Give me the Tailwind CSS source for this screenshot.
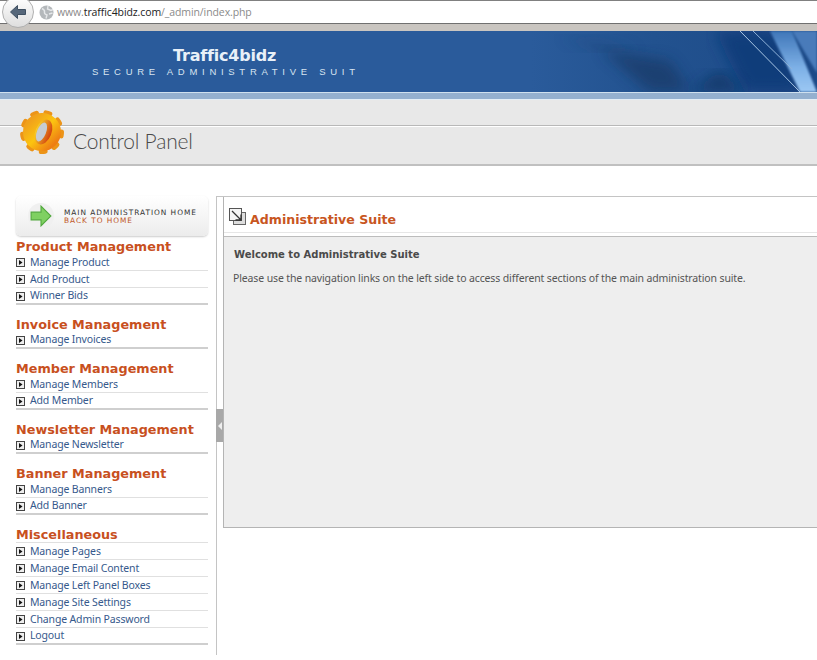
<!DOCTYPE html>
<html lang="en">
<head>
<meta charset="UTF-8">
<title>Traffic4bidz - Control Panel</title>
<script src="https://cdn.jsdelivr.net/npm/@tailwindcss/browser@4"></script>
</head>
<body class="bg-white w-[817px] h-[660px] overflow-hidden font-['Noto_Sans',sans-serif]">

<!-- browser chrome -->
<div class="relative h-[31px] bg-[#c9c5c0]">
  <div class="h-[24px] bg-white border-t border-b border-t-[#808080] border-b-[#707070] flex items-center pl-[39px]">
    <svg width="15" height="15" viewBox="0 0 15 15" class="shrink-0">
      <circle cx="7.5" cy="7.5" r="7" fill="#b4b8bb"/>
      <path d="M3 3.5 Q6 5 5.5 7 T8 10 L7 13.5 M9 1 L8.5 4 L12 5.5 L14 4.5 M10 9 L13.5 8" fill="none" stroke="#e6e8ea" stroke-width="1.4"/>
    </svg>
    <span class="ml-[3px] text-[10.5px] tracking-[-0.1px] leading-none text-[#8a8a8a] font-['Open_Sans',sans-serif]">www.<span class="text-[#222]">traffic4bidz.com</span>/_admin/index.php</span>
  </div>
  <div class="absolute left-[2px] top-[-4px] w-[32px] h-[32px] rounded-full bg-gradient-to-b from-white to-[#dedede] border border-[#b0b0b0] flex items-center justify-center">
    <svg width="18" height="16" viewBox="0 0 18 16"><path d="M8.5 1.5 L1.5 8 L8.5 14.5 V10.5 H16.5 V5.5 H8.5 Z" fill="#56677a" stroke="#3f5062" stroke-width="1"/></svg>
  </div>
</div>

<!-- banner -->
<div class="relative h-[61px] overflow-hidden bg-[linear-gradient(90deg,#2a5b9b_0%,#2a5b9b_65%,#22528f_80%,#1d4a88_100%)] flex flex-col items-start">
  <svg class="absolute inset-0" width="817" height="61" viewBox="0 0 817 61">
    <defs>
      <linearGradient id="streak" x1="0" y1="0" x2="0" y2="1"><stop offset="0" stop-color="#3f76b8"/><stop offset=".6" stop-color="#7db0e6"/><stop offset="1" stop-color="#9cc8f4"/></linearGradient>
      <filter id="soft"><feGaussianBlur stdDeviation="7"/></filter>
      <filter id="soft2"><feGaussianBlur stdDeviation="1.2"/></filter>
    </defs>
    <path d="M600 18 L670 30 L690 61 L650 61 Z" fill="#14305a" opacity=".55" filter="url(#soft)"/>
    <path d="M560 5 L640 20 L600 20 Z" fill="#1b3f70" opacity=".5" filter="url(#soft)"/>
    <path d="M715 0 L775 0 L805 61 L745 61 Z" fill="#113a78" opacity=".85" filter="url(#soft)"/>
    <path d="M690 61 L745 61 L720 40 Z" fill="#10305f" opacity=".7" filter="url(#soft)"/>
    <path d="M770 0 L792 0 L817 61 L800 61 Z" fill="url(#streak)" filter="url(#soft2)"/>
    <path d="M792 0 L817 0 L817 42 Z" fill="#5b90d0" opacity=".7" filter="url(#soft2)"/>
    <path d="M740 0 L800 61" stroke="#a8c6e4" stroke-width="1" fill="none"/>
    <path d="M753 0 L792 38" stroke="#8fb2d8" stroke-width="1" fill="none"/>
  </svg>
  <div class="relative ml-[173px] mt-[15px] text-[16px] leading-[20px] font-bold text-[#e8f0f8] font-['DejaVu_Sans',sans-serif] tracking-[-0.2px]">Traffic4bidz</div>
  <div class="relative ml-[92px] text-[9.5px] leading-[11px] text-[#d8e4f0] tracking-[4.72px] font-['Liberation_Sans',sans-serif] whitespace-nowrap">SECURE ADMINISTRATIVE SUIT</div>
</div>
<div class="h-[8px] bg-[#94b0cf] border-t border-b border-t-[#cfe0ee] border-b-[#e4eef6]"></div>

<!-- control panel bar -->
<div class="relative h-[66px] bg-[#e8e8e8] border-b-2 border-b-[#c0c0c0]">
  <div class="absolute left-0 right-0 top-[25px] h-[2px] bg-[#b8b8b8] border-b border-white"></div>
  <svg class="absolute left-[18px] top-[8px]" width="48" height="48" viewBox="0 0 48 48">
    <defs>
      <linearGradient id="gear" x1="0" y1="0" x2="1" y2="1">
        <stop offset="0" stop-color="#f0a01c"/><stop offset=".5" stop-color="#fcc410"/><stop offset="1" stop-color="#ee7e14"/>
      </linearGradient>
      <linearGradient id="gearin" x1="0" y1="0" x2="1" y2="0">
        <stop offset="0" stop-color="#f6d030"/><stop offset="1" stop-color="#d2400e"/>
      </linearGradient>
    </defs>
    <circle cx="24" cy="24" r="19.5" fill="none" stroke="#ec9418" stroke-width="5" stroke-dasharray="4 9.61" stroke-linecap="round"/>
    <circle cx="24" cy="24" r="12" fill="none" stroke="url(#gear)" stroke-width="14"/>
    <ellipse cx="25.5" cy="24" rx="8" ry="13" transform="rotate(22 25.5 24)" fill="url(#gearin)"/>
    <ellipse cx="23.5" cy="24" rx="4.5" ry="10" transform="rotate(22 23.5 24)" fill="#c6ccd4"/>
  </svg>
  <div class="absolute left-[73px] top-[27px] text-[21px] leading-[28px] font-light tracking-[-0.2px] text-[#4a4a4a] font-['Lato',sans-serif]">Control Panel</div>
</div>

<!-- body -->
<div class="flex mt-[30px]">
  <aside class="ml-[16px] w-[192px] shrink-0">
    <div class="h-[40px] rounded-[5px] bg-gradient-to-b from-white to-[#ececec] shadow-[0_1px_2px_#ccc] flex items-center pl-[12px] mb-[2px]">
      <div class="w-[26px] h-[26px] rounded-full bg-[#f0f0f0] flex items-center justify-center shrink-0">
        <svg width="22" height="22" viewBox="0 0 20 20"><path d="M1 6.5 H10 V1 L19 10 L10 19 V13.5 H1 Z" fill="#7fd062" stroke="#52a83e" stroke-width="1"/></svg>
      </div>
      <div class="ml-[10px] mt-[2px] text-[7.4px] leading-[8px] tracking-[0.96px] font-['DejaVu_Sans',sans-serif] whitespace-nowrap">
        <div class="text-[#333]">MAIN ADMINISTRATION HOME</div>
        <div class="text-[#c0582a]">BACK TO HOME</div>
      </div>
    </div>

    <section class="mb-[11px]">
      <h2 class="h-[16px] leading-[18px] text-[12.8px] font-bold text-[#c8501e] font-['DejaVu_Sans',sans-serif] whitespace-nowrap">Product Management</h2>
      <ul class="[&>li]:h-[17px] [&>li]:pt-[1px] [&>li]:flex [&>li]:items-center [&>li]:gap-[5px] [&>li]:text-[10.5px] [&>li]:tracking-[-0.15px] [&>li]:text-[#36598c] [&>li]:border-b [&>li]:border-b-[#e0e0e0] [&>li:last-child]:border-b-2 [&>li:last-child]:border-b-[#cfcfcf]">
        <li><svg width="9" height="9" viewBox="0 0 9 9"><rect x=".5" y=".5" width="8" height="8" fill="#eee" stroke="#444"/><path d="M3 2 L6.5 4.5 L3 7 Z" fill="#111"/></svg>Manage Product</li>
        <li><svg width="9" height="9" viewBox="0 0 9 9"><rect x=".5" y=".5" width="8" height="8" fill="#eee" stroke="#444"/><path d="M3 2 L6.5 4.5 L3 7 Z" fill="#111"/></svg>Add Product</li>
        <li><svg width="9" height="9" viewBox="0 0 9 9"><rect x=".5" y=".5" width="8" height="8" fill="#eee" stroke="#444"/><path d="M3 2 L6.5 4.5 L3 7 Z" fill="#111"/></svg>Winner Bids</li>
      </ul>
    </section>

    <section class="mb-[11px]">
      <h2 class="h-[16px] leading-[18px] text-[12.8px] font-bold text-[#c8501e] font-['DejaVu_Sans',sans-serif] whitespace-nowrap">Invoice Management</h2>
      <ul class="[&>li]:h-[17px] [&>li]:pt-[1px] [&>li]:flex [&>li]:items-center [&>li]:gap-[5px] [&>li]:text-[10.5px] [&>li]:tracking-[-0.15px] [&>li]:text-[#36598c] [&>li]:border-b [&>li]:border-b-[#e0e0e0] [&>li:last-child]:border-b-2 [&>li:last-child]:border-b-[#cfcfcf]">
        <li><svg width="9" height="9" viewBox="0 0 9 9"><rect x=".5" y=".5" width="8" height="8" fill="#eee" stroke="#444"/><path d="M3 2 L6.5 4.5 L3 7 Z" fill="#111"/></svg>Manage Invoices</li>
      </ul>
    </section>

    <section class="mb-[11px]">
      <h2 class="h-[16px] leading-[18px] text-[12.8px] font-bold text-[#c8501e] font-['DejaVu_Sans',sans-serif] whitespace-nowrap">Member Management</h2>
      <ul class="[&>li]:h-[17px] [&>li]:pt-[1px] [&>li]:flex [&>li]:items-center [&>li]:gap-[5px] [&>li]:text-[10.5px] [&>li]:tracking-[-0.15px] [&>li]:text-[#36598c] [&>li]:border-b [&>li]:border-b-[#e0e0e0] [&>li:last-child]:border-b-2 [&>li:last-child]:border-b-[#cfcfcf]">
        <li><svg width="9" height="9" viewBox="0 0 9 9"><rect x=".5" y=".5" width="8" height="8" fill="#eee" stroke="#444"/><path d="M3 2 L6.5 4.5 L3 7 Z" fill="#111"/></svg>Manage Members</li>
        <li><svg width="9" height="9" viewBox="0 0 9 9"><rect x=".5" y=".5" width="8" height="8" fill="#eee" stroke="#444"/><path d="M3 2 L6.5 4.5 L3 7 Z" fill="#111"/></svg>Add Member</li>
      </ul>
    </section>

    <section class="mb-[11px]">
      <h2 class="h-[16px] leading-[18px] text-[12.8px] font-bold text-[#c8501e] font-['DejaVu_Sans',sans-serif] whitespace-nowrap">Newsletter Management</h2>
      <ul class="[&>li]:h-[17px] [&>li]:pt-[1px] [&>li]:flex [&>li]:items-center [&>li]:gap-[5px] [&>li]:text-[10.5px] [&>li]:tracking-[-0.15px] [&>li]:text-[#36598c] [&>li]:border-b [&>li]:border-b-[#e0e0e0] [&>li:last-child]:border-b-2 [&>li:last-child]:border-b-[#cfcfcf]">
        <li><svg width="9" height="9" viewBox="0 0 9 9"><rect x=".5" y=".5" width="8" height="8" fill="#eee" stroke="#444"/><path d="M3 2 L6.5 4.5 L3 7 Z" fill="#111"/></svg>Manage Newsletter</li>
      </ul>
    </section>

    <section class="mb-[11px]">
      <h2 class="h-[16px] leading-[18px] text-[12.8px] font-bold text-[#c8501e] font-['DejaVu_Sans',sans-serif] whitespace-nowrap">Banner Management</h2>
      <ul class="[&>li]:h-[17px] [&>li]:pt-[1px] [&>li]:flex [&>li]:items-center [&>li]:gap-[5px] [&>li]:text-[10.5px] [&>li]:tracking-[-0.15px] [&>li]:text-[#36598c] [&>li]:border-b [&>li]:border-b-[#e0e0e0] [&>li:last-child]:border-b-2 [&>li:last-child]:border-b-[#cfcfcf]">
        <li><svg width="9" height="9" viewBox="0 0 9 9"><rect x=".5" y=".5" width="8" height="8" fill="#eee" stroke="#444"/><path d="M3 2 L6.5 4.5 L3 7 Z" fill="#111"/></svg>Manage Banners</li>
        <li><svg width="9" height="9" viewBox="0 0 9 9"><rect x=".5" y=".5" width="8" height="8" fill="#eee" stroke="#444"/><path d="M3 2 L6.5 4.5 L3 7 Z" fill="#111"/></svg>Add Banner</li>
      </ul>
    </section>

    <section>
      <h2 class="h-[17px] leading-[18px] text-[12.8px] font-bold text-[#c8501e] font-['DejaVu_Sans',sans-serif] border-b border-b-[#e0e0e0] whitespace-nowrap">Miscellaneous</h2>
      <ul class="[&>li]:h-[17px] [&>li]:pt-[1px] [&>li]:flex [&>li]:items-center [&>li]:gap-[5px] [&>li]:text-[10.5px] [&>li]:tracking-[-0.15px] [&>li]:text-[#36598c] [&>li]:border-b [&>li]:border-b-[#e0e0e0] [&>li:last-child]:border-b-2 [&>li:last-child]:border-b-[#cfcfcf]">
        <li><svg width="9" height="9" viewBox="0 0 9 9"><rect x=".5" y=".5" width="8" height="8" fill="#eee" stroke="#444"/><path d="M3 2 L6.5 4.5 L3 7 Z" fill="#111"/></svg>Manage Pages</li>
        <li><svg width="9" height="9" viewBox="0 0 9 9"><rect x=".5" y=".5" width="8" height="8" fill="#eee" stroke="#444"/><path d="M3 2 L6.5 4.5 L3 7 Z" fill="#111"/></svg>Manage Email Content</li>
        <li><svg width="9" height="9" viewBox="0 0 9 9"><rect x=".5" y=".5" width="8" height="8" fill="#eee" stroke="#444"/><path d="M3 2 L6.5 4.5 L3 7 Z" fill="#111"/></svg>Manage Left Panel Boxes</li>
        <li><svg width="9" height="9" viewBox="0 0 9 9"><rect x=".5" y=".5" width="8" height="8" fill="#eee" stroke="#444"/><path d="M3 2 L6.5 4.5 L3 7 Z" fill="#111"/></svg>Manage Site Settings</li>
        <li><svg width="9" height="9" viewBox="0 0 9 9"><rect x=".5" y=".5" width="8" height="8" fill="#eee" stroke="#444"/><path d="M3 2 L6.5 4.5 L3 7 Z" fill="#111"/></svg>Change Admin Password</li>
        <li><svg width="9" height="9" viewBox="0 0 9 9"><rect x=".5" y=".5" width="8" height="8" fill="#eee" stroke="#444"/><path d="M3 2 L6.5 4.5 L3 7 Z" fill="#111"/></svg>Logout</li>
      </ul>
    </section>
  </aside>

  <!-- main panel -->
  <main class="relative ml-[8px] flex-1 h-[459px] border-l border-t border-[#c4c4c4] pl-[6px]">
    <div class="absolute left-[-1px] top-[212px] w-[7px] h-[33px] bg-[#a8a8a8] flex items-center justify-center">
      <div class="w-0 h-0 border-y-[4px] border-y-transparent border-r-[4px] border-r-[#eee]"></div>
    </div>
    <div class="h-[331px] border-l border-[#b4b4b4] flex flex-col">
      <div class="h-[36px] flex items-center pl-[5px] pt-[12px] gap-[4px] border-b border-b-[#e6e6e6]">
        <svg width="17" height="17" viewBox="0 0 17 17" class="-mt-[8px]">
          <rect x="4.5" y="4.5" width="12" height="12" fill="#ddd" stroke="#666"/>
          <rect x=".5" y=".5" width="12" height="12" fill="#f4f4f4" stroke="#555"/>
          <path d="M3 3 L12 12 M12 6.5 V12 H6.5" fill="none" stroke="#333" stroke-width="1.3"/>
        </svg>
        <h1 class="text-[12.6px] font-bold text-[#c8561f] font-['DejaVu_Sans',sans-serif]">Administrative Suite</h1>
      </div>
      <div class="h-[4px] bg-white border-b border-b-[#bcbcbc]"></div>
      <div class="flex-1 bg-[#eeeeee] border-b border-b-[#b4b4b4] pl-[10px] pt-[10px]">
        <h3 class="text-[10px] leading-[16px] font-bold text-[#4a4a4a] font-['DejaVu_Sans',sans-serif]">Welcome to Administrative Suite</h3>
        <p class="mt-[7px] -ml-[1px] text-[10.5px] tracking-[-0.13px] leading-[16px] text-[#555] whitespace-nowrap">Please use the navigation links on the left side to access different sections of the main administration suite.</p>
      </div>
    </div>
  </main>
</div>

</body>
</html>
